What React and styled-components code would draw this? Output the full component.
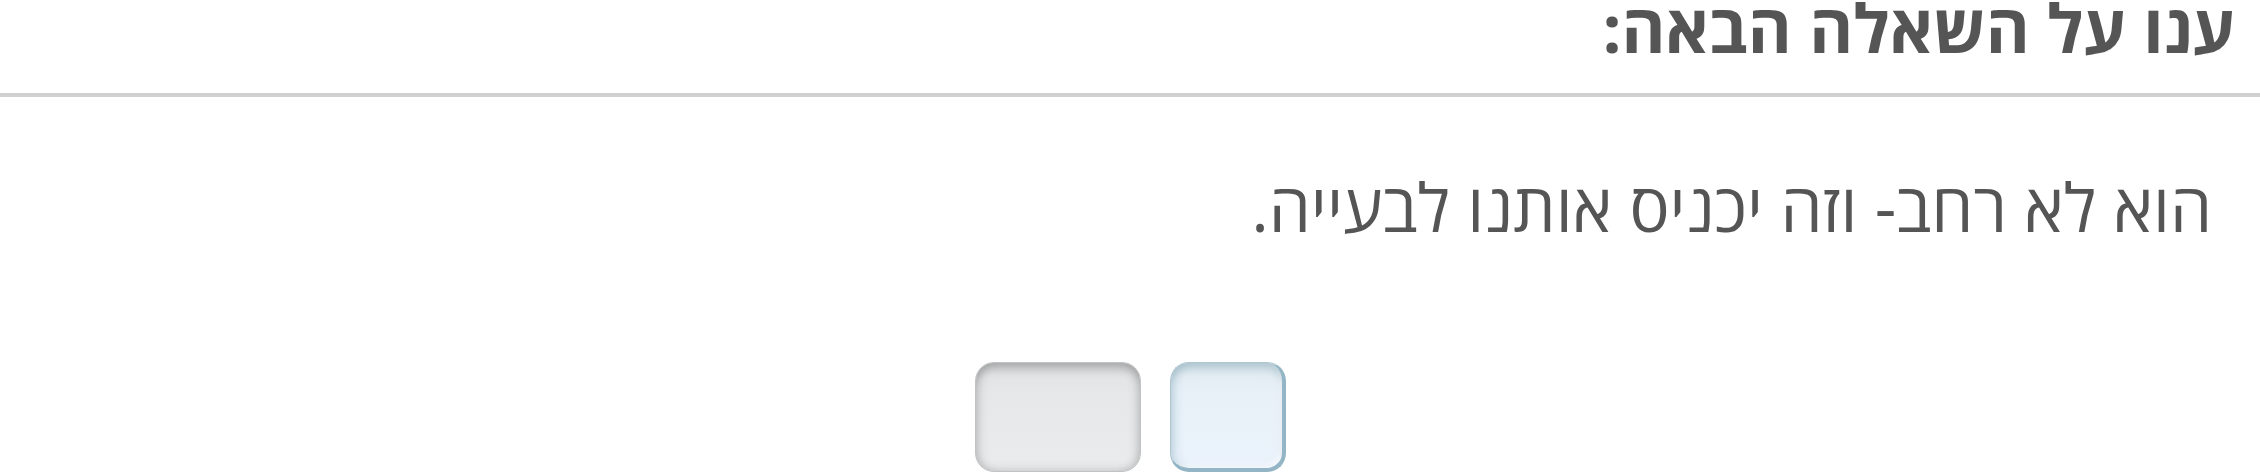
import React from 'react';
import styled, { createGlobalStyle, css } from 'styled-components';

const GlobalStyle = createGlobalStyle`
  html, body {
    margin: 0;
    padding: 0;
    background: #fff;
  }
  body {
    font-family: "Open Sans", "DejaVu Sans", sans-serif;
    color: #555;
  }
`;

const Page = styled.div`
  direction: rtl;
  width: 100%;
  height: 473px;
  overflow: hidden;
`;

const Header = styled.div`
  height: 93px;
  padding-right: 25px;
  border-bottom: 4px solid #d0d0d0;
`;

const Title = styled.h1`
  margin: 0;
  font-size: 67px;
  font-weight: 700;
  line-height: 54px;
  color: #555;
  white-space: nowrap;
`;

const Question = styled.p`
  margin: 0;
  padding: 71px 48px 0 0;
  font-size: 67px;
  font-weight: 400;
  line-height: 76px;
  color: #555;
  white-space: nowrap;
`;

const Answers = styled.div`
  display: flex;
  justify-content: center;
  gap: 29px;
  direction: ltr;
  margin-top: 118px;
`;

const AnswerButton = styled.button`
  width: ${({ $wide }) => ($wide ? '166px' : '116px')};
  height: 110px;
  border-radius: 19px;
  padding: 0;
  cursor: pointer;
  border: 1px solid #c2c3c4;
  background: linear-gradient(180deg, #dfe1e2 0%, #e6e8e9 30%, #eaebec 100%);
  box-shadow:
    inset 0 9px 9px -3px rgba(90, 90, 90, 0.35),
    inset 9px 0 9px -5px rgba(110, 110, 110, 0.22),
    inset -9px 0 9px -5px rgba(110, 110, 110, 0.22),
    inset 0 -7px 8px -5px rgba(110, 110, 110, 0.2);

  ${({ $selected }) => $selected && css`
    border: 1px solid #afc6cf;
    border-right: 4px solid #93b5c5;
    border-bottom: 4px solid #93b5c5;
    background: linear-gradient(180deg, #e2ebf1 0%, #e8f0f8 30%, #eaf2fb 100%);
    box-shadow:
      inset 0 9px 9px -3px rgba(110, 150, 165, 0.4),
      inset 9px 0 9px -5px rgba(130, 170, 185, 0.3),
      inset -4px -4px 6px -3px rgba(255, 255, 255, 0.8);
  `}
`;

const App = () => (
  <Page>
    <GlobalStyle />
    <Header>
      <Title>ענו על השאלה הבאה:</Title>
    </Header>
    <Question>הוא לא רחב- וזה יכניס אותנו לבעייה.</Question>
    <Answers>
      <AnswerButton $wide />
      <AnswerButton $selected />
    </Answers>
  </Page>
);

export default App;
